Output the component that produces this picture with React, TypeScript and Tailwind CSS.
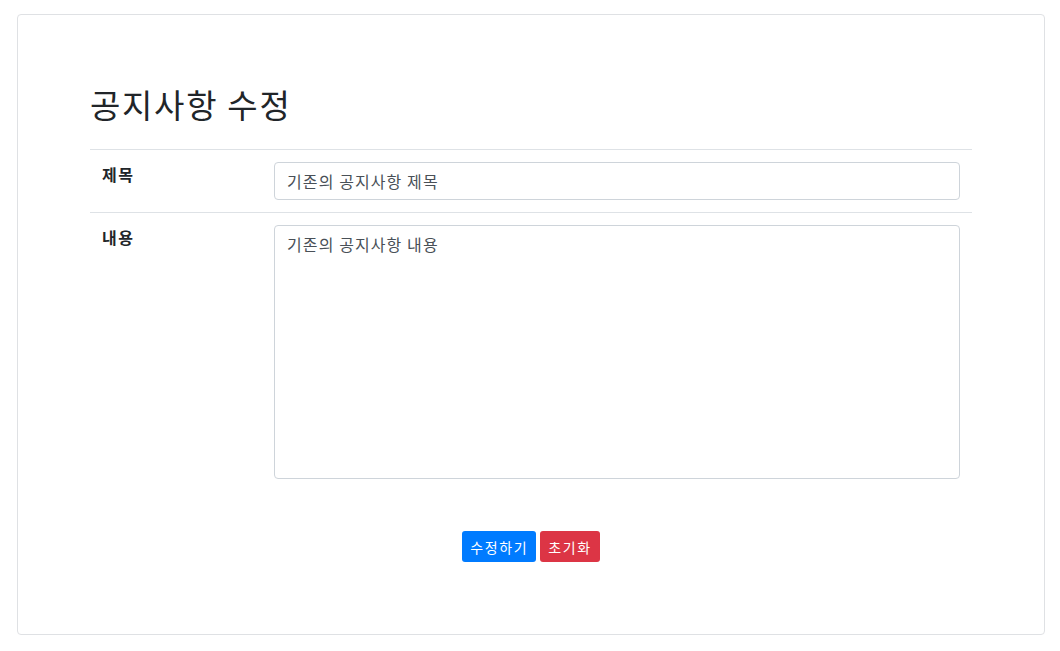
export default function App() {
  return (
    <div
      className="min-h-[651px] bg-white pt-[14px] pl-[17px] pr-[15px] text-[#212529]"
      style={{ fontFamily: '"Noto Sans CJK KR", "Noto Sans", sans-serif' }}
    >
      <div className="h-[621px] rounded border border-[#dfe1e4] px-[72px] pt-[70px]">
        <h2 className="mb-[26px] text-[33px] font-normal leading-[38px] tracking-[1.7px]">공지사항 수정</h2>
        <table className="w-full border-collapse">
          <tbody>
            <tr className="border-t border-[#dee2e6]">
              <th className="w-[172px] p-3 text-left align-top text-base font-bold leading-6 tracking-[1.5px]">제목</th>
              <td className="p-3 align-top">
                <input
                  type="text"
                  defaultValue="기존의 공지사항 제목"
                  className="block h-[38px] w-full rounded border border-[#ced4da] px-3 text-base tracking-[1.1px] text-[#495057] outline-none"
                />
              </td>
            </tr>
            <tr className="border-t border-[#dee2e6]">
              <th className="p-3 text-left align-top text-base font-bold leading-6 tracking-[1.5px]">내용</th>
              <td className="p-3 align-top">
                <textarea
                  defaultValue="기존의 공지사항 내용"
                  className="block h-[254px] w-full resize-none rounded border border-[#ced4da] px-3 py-[6px] text-base leading-6 tracking-[1.1px] text-[#495057] outline-none"
                />
              </td>
            </tr>
          </tbody>
        </table>
        <div className="mt-[40px] flex justify-center gap-1">
          <button className="h-[31px] rounded-[3px] bg-[#007bff] px-2 text-sm tracking-[1.6px] text-white">수정하기</button>
          <button className="h-[31px] rounded-[3px] bg-[#dc3545] px-2 text-sm tracking-[1.6px] text-white">초기화</button>
        </div>
      </div>
    </div>
  );
}
